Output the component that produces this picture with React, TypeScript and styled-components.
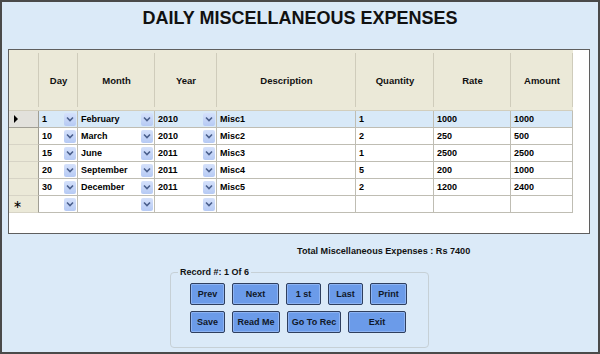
import React from 'react';
import styled, { createGlobalStyle } from 'styled-components';

const Global = createGlobalStyle`
  html, body { margin: 0; padding: 0; }
  body { font-family: "Liberation Sans", Arial, sans-serif; background: #ffffff; }
  * { box-sizing: border-box; }
`;

const Frame = styled.div`
  width: 600px;
  height: 354px;
  background: #dbeaf8;
  border: 2px solid #4a4a4a;
  display: flex;
  flex-direction: column;
`;

const Title = styled.h1`
  margin: 0;
  height: 47px;
  padding-top: 6px;
  text-align: center;
  font-size: 18px;
  line-height: 20px;
  font-weight: bold;
  color: #111;
`;

const GridBox = styled.div`
  margin-left: 6px;
  width: 582px;
  height: 185px;
  border: 1px solid #5f5f5f;
  background: #ffffff;
  display: flex;
  flex-direction: column;
`;

const HeaderRow = styled.div`
  display: flex;
  height: 61px;
`;

const HeaderCell = styled.div<{ $w: number }>`
  width: ${(p) => p.$w}px;
  flex: none;
  background: #ebe9d8;
  border-bottom: 1px solid #d2cebd;
  position: relative;
  display: flex;
  align-items: center;
  justify-content: center;
  font-size: 9.5px;
  font-weight: bold;
  color: #111;
  &::after {
    content: '';
    position: absolute;
    right: 0;
    top: 3px;
    bottom: 3px;
    width: 1px;
    background: #cfccbb;
    box-shadow: 1px 0 0 #ffffff;
  }
`;

const Row = styled.div`
  display: flex;
  height: 17px;
`;

const RowHead = styled.div<{ $current?: boolean }>`
  width: 30px;
  flex: none;
  background: ${(p) => (p.$current ? '#e2e1dc' : '#ebe9d8')};
  border-right: 1px solid #a09e94;
  border-bottom: 1px solid ${(p) => (p.$current ? '#a09e94' : '#d7d4c6')};
  display: flex;
  align-items: center;
  padding-left: 4px;
  font-family: "DejaVu Sans", sans-serif;
  font-size: 11px;
  font-weight: normal;
  color: #000;
`;

const Cell = styled.div<{ $w: number; $sel?: boolean }>`
  width: ${(p) => p.$w}px;
  flex: none;
  background: ${(p) => (p.$sel ? '#d8e9f8' : '#ffffff')};
  border-right: 1px solid #bfbdb3;
  border-bottom: 1px solid #bfbdb3;
  display: flex;
  align-items: center;
  justify-content: space-between;
  padding-left: 3px;
  font-size: 9px;
  font-weight: bold;
  color: #000;
  white-space: nowrap;
`;

const DropBtn = styled.span`
  width: 12px;
  height: 13px;
  margin-right: 1px;
  border-radius: 2px;
  background: linear-gradient(#d5e1fb, #b6caf4);
  display: flex;
  align-items: center;
  justify-content: center;
`;

const TotalLine = styled.div`
  margin: 11px 0 0 295px;
  font-size: 9.1px;
  line-height: 12px;
  font-weight: bold;
  color: #111;
`;

const Group = styled.fieldset`
  margin: 10px 0 0 168px;
  width: 259px;
  padding: 6px 0 14px 7px;
  border: 1px solid #c6d0d6;
  border-radius: 4px;
  display: flex;
  flex-direction: column;
  gap: 6px;
`;

const Legend = styled.legend`
  margin-left: 0;
  padding: 0 2px;
  font-size: 9px;
  font-weight: bold;
  color: #111;
`;

const ButtonRow = styled.div`
  display: flex;
  gap: 7px;
  margin-left: 12px;
`;

const Btn = styled.button<{ $w: number }>`
  width: ${(p) => p.$w}px;
  height: 22px;
  padding: 0;
  border: 1px solid #2f3f5e;
  border-radius: 2px;
  background: #6b9be9;
  box-shadow: inset 0 0 0 1px #8db3f2;
  font-family: "Liberation Sans", Arial, sans-serif;
  font-size: 9px;
  font-weight: bold;
  color: #101828;
`;

const Triangle = () => (
  <svg width="6" height="8" viewBox="0 0 6 8">
    <path d="M1 0 L5 4 L1 8 Z" fill="#000" />
  </svg>
);

const Chevron = () => (
  <svg width="8" height="6" viewBox="0 0 8 6">
    <polyline points="1,1.5 4,4.5 7,1.5" fill="none" stroke="#4a5f8c" strokeWidth="1.6" />
  </svg>
);

type Col = { key: string; label: string; w: number; combo?: boolean };

const cols: Col[] = [
  { key: 'day', label: 'Day', w: 39, combo: true },
  { key: 'month', label: 'Month', w: 77, combo: true },
  { key: 'year', label: 'Year', w: 62, combo: true },
  { key: 'desc', label: 'Description', w: 139 },
  { key: 'qty', label: 'Quantity', w: 78 },
  { key: 'rate', label: 'Rate', w: 77 },
  { key: 'amount', label: 'Amount', w: 62 },
];

const rows: Record<string, string>[] = [
  { day: '1', month: 'February', year: '2010', desc: 'Misc1', qty: '1', rate: '1000', amount: '1000' },
  { day: '10', month: 'March', year: '2010', desc: 'Misc2', qty: '2', rate: '250', amount: '500' },
  { day: '15', month: 'June', year: '2011', desc: 'Misc3', qty: '1', rate: '2500', amount: '2500' },
  { day: '20', month: 'September', year: '2011', desc: 'Misc4', qty: '5', rate: '200', amount: '1000' },
  { day: '30', month: 'December', year: '2011', desc: 'Misc5', qty: '2', rate: '1200', amount: '2400' },
];

const row1 = [
  ['Prev', 35],
  ['Next', 47],
  ['1 st', 35],
  ['Last', 35],
  ['Print', 37],
] as const;

const row2 = [
  ['Save', 35],
  ['Read Me', 48],
  ['Go To Rec', 54],
  ['Exit', 58],
] as const;

export default function App() {
  return (
    <>
      <Global />
      <Frame>
        <Title>DAILY MISCELLANEOUS EXPENSES</Title>
        <GridBox>
          <HeaderRow>
            <HeaderCell $w={30} />
            {cols.map((c) => (
              <HeaderCell key={c.key} $w={c.w}>
                {c.label}
              </HeaderCell>
            ))}
          </HeaderRow>
          {rows.map((r, i) => (
            <Row key={i}>
              <RowHead $current={i === 0}>{i === 0 ? <Triangle /> : null}</RowHead>
              {cols.map((c) => (
                <Cell key={c.key} $w={c.w} $sel={i === 0}>
                  <span>{r[c.key]}</span>
                  {c.combo ? (
                    <DropBtn>
                      <Chevron />
                    </DropBtn>
                  ) : null}
                </Cell>
              ))}
            </Row>
          ))}
          <Row>
            <RowHead>∗</RowHead>
            {cols.map((c) => (
              <Cell key={c.key} $w={c.w}>
                <span />
                {c.combo ? (
                  <DropBtn>
                    <Chevron />
                  </DropBtn>
                ) : null}
              </Cell>
            ))}
          </Row>
        </GridBox>
        <TotalLine>Total Miscellaneous Expenses : Rs 7400</TotalLine>
        <Group>
          <Legend>Record #: 1 Of 6</Legend>
          <ButtonRow>
            {row1.map(([t, w]) => (
              <Btn key={t} $w={w}>
                {t}
              </Btn>
            ))}
          </ButtonRow>
          <ButtonRow>
            {row2.map(([t, w]) => (
              <Btn key={t} $w={w}>
                {t}
              </Btn>
            ))}
          </ButtonRow>
        </Group>
      </Frame>
    </>
  );
}
